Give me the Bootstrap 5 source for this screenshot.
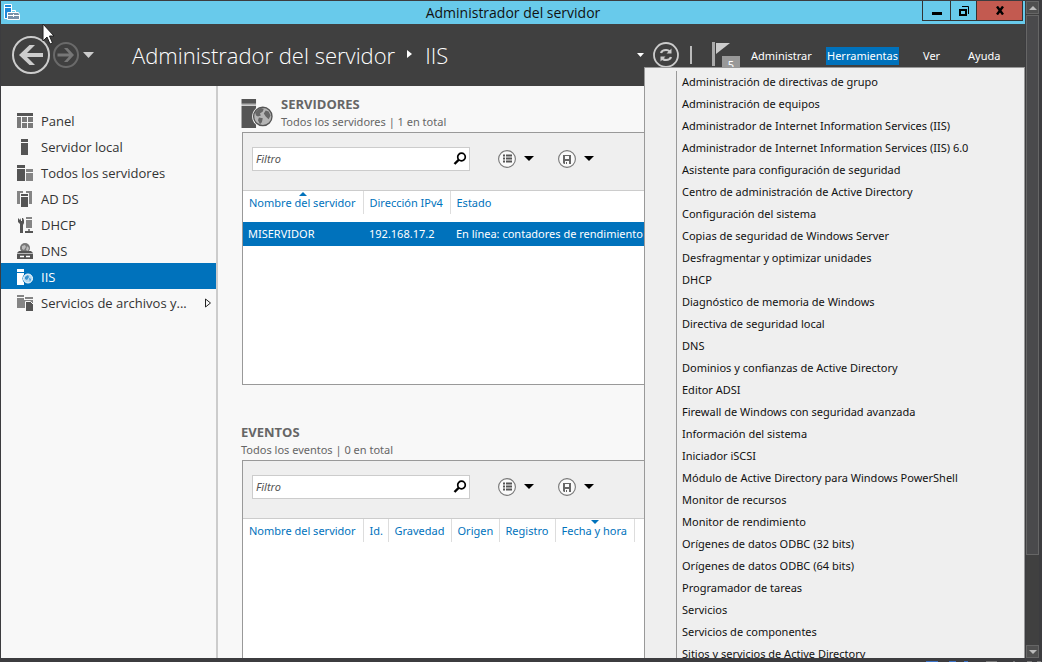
<!DOCTYPE html>
<html lang="es">
<head>
<meta charset="utf-8">
<meta name="viewport" content="width=device-width, initial-scale=1">
<title>Administrador del servidor</title>
<link href="https://cdn.jsdelivr.net/npm/bootstrap@5.3.0/dist/css/bootstrap.min.css" rel="stylesheet">
<style>
:root{--ink:#404040;--sky:#68caeb;--accent:#0072bc;--pane:#f8f8f8;--tool:#efefef;--edge:#999;--soft:#ccc}
body{font-family:"Noto Sans","Open Sans",sans-serif;font-size:11px;line-height:16px;background:#3c3c3f;color:#333}
button{font:inherit;color:inherit;border:0;background:transparent;padding:0}
svg{display:block;flex:none}
.screen{height:100vh;padding:1px 0 4px 1px;overflow:hidden}
.window-main{min-width:0}
.titlebar{background:var(--sky);height:23px;color:#111;font:14px/23px "Open Sans",sans-serif}
.app-icon{left:2px;top:2px}
.win-buttons{right:2px;top:0;height:20px;border:1px solid #333;border-top:0}
.win-buttons button{width:28px;border-right:1px solid #333;color:#000}
.win-buttons .restore{width:26px}
.win-buttons .close-win{width:45px;border:0;background:#c35a50}
.header{background:var(--ink);color:#fff;height:62px}
.nav-icons{padding-left:11px;width:131px}
.nav-icons .forward{margin-left:3px}
.crumb{font:300 22px/30px "Open Sans",sans-serif;white-space:nowrap;gap:12px}
.crumb svg{margin-top:-2px}
.status{gap:9px;padding-right:10px}
.status .divider{width:2px;height:18px;background:#bbb;margin:0 11px 0 2px}
.flag{width:28px;height:28px}
.flag .count{left:10px;top:15px;width:18px;height:16px;background:#999;line-height:17px}
.menus{display:grid;grid-template-columns:76px 96px 45px 36px;justify-items:start;margin:1px 22px 0 0}
.menus button{padding:0 1px;line-height:18px}
.menus .active{background:var(--accent)}
.side{width:217px;background:var(--pane);border-right:2px solid var(--soft);padding-top:21px}
.side a{height:26px;padding:1px 4px 0 16px;gap:8px;font:13px/20px "Open Sans",sans-serif;color:#333;text-decoration:none}
.side a.active{background:var(--accent);color:#fff}
.content{background:var(--pane);min-width:0;padding:9px 0 0 23px}
.head-gap{margin-top:38px}
.tile-title{font:700 13px/18px "Open Sans",sans-serif;color:#666;margin:0}
.tile-sub{line-height:18px;color:#666}
.tile{border:1px solid var(--edge);background:#fff;margin:1px 0 0 1px;flex:none}
.tile.servers{min-height:253px}
.tools{height:58px;background:var(--tool);border-bottom:1px solid var(--soft);padding:14px 0 0 9px}
.search{width:218px;height:24px;background:#fff;border:1px solid var(--soft);padding-right:2px}
.search input{border:0;outline:0;min-width:0;padding:0 0 0 3px;font-style:italic;background:transparent}
.search input::placeholder{color:#555;opacity:1}
.tool{height:24px;gap:7px}
.grid-data{border-collapse:collapse;table-layout:fixed;width:100%;white-space:nowrap}
.grid-data th{font-weight:400;color:var(--accent);padding:0 0 0 6px;height:23px;border-left:1px solid #ddd;position:relative}
.grid-data th:first-child{border-left:0}
.grid-data .sort{top:1px;left:50%;margin-left:-4px}
.grid-data .spacer td{background:#fff;height:8px}
.grid-data td{background:var(--accent);color:#fff;height:24px;padding:0 0 0 6px}
.grid-data td:first-child{padding-left:5px}
.w-name{width:120px}.w-ip{width:87px}.w-id{width:25px}.w-sev{width:63px}.w-src{width:48px}.w-log{width:56px}.w-date{width:79px}
.menu-pop{right:0;top:66px;bottom:0;width:381px;background:var(--tool);border:1px solid var(--edge);border-bottom:0;overflow:hidden;padding:3px 0 0 31px;z-index:5}
.menu-pop ul{border-left:1px solid var(--edge)}
.menu-pop button{display:block;width:100%;height:22px;text-align:left;padding-left:5px;color:#111;white-space:nowrap}
.vscroll{width:13px;margin:0 3px 0 1px;background:#404040}
.vscroll button{height:13px;background:#505050;border:1px solid #666}
.vscroll .thumb{flex:6 1 0;margin-top:1px;background:#4a4a4c;border:1px solid #666}
.pointer{left:42px;top:23px;z-index:9}
.taskbar-peek{right:0;bottom:0}
</style>
</head>
<body>
<svg width="0" height="0" class="position-absolute" aria-hidden="true">
<defs>
<g id="list"><circle cx="9" cy="9" r="8.4" fill="#fafafa" stroke="#777" stroke-width="1.1"/><path d="M5 5.500h2M8 5.500h6M5 8.500h2M8 8.500h6M5 11.500h2M8 11.500h6" stroke="#555" stroke-width="2"/></g>
<g id="disk"><circle cx="9" cy="9" r="8.400" fill="#fafafa" stroke="#777" stroke-width="1.100"/><path d="M5 5h8v9H6l-1-1z" fill="#666"/><path d="M7 6h4v3H7zM7 11h4v3H9v-2H8v2H7z" fill="#fafafa"/></g>
<g id="glass"><circle cx="8.500" cy="5" r="3.800" fill="none" stroke="#000" stroke-width="1.700"/><path d="M6 7.500L1.500 12" stroke="#000" stroke-width="2.400"/></g>
<path id="caret" d="M0 0h10L5 5z"/>
</defs>
</svg>
<div class="screen d-flex position-relative">
<main class="window-main d-flex flex-column flex-grow-1 position-relative">
  <div class="titlebar text-center position-relative flex-shrink-0">
    <svg class="app-icon position-absolute" width="18" height="18" viewBox="0 0 18 18"><path d="M1.500 1.500h7v14h-7z" fill="#1e88d8" stroke="#fff"/><path d="M1 4.500h8" stroke="#fff"/><path d="M4.500 9.500h11l1 2v5h-12z" fill="#7890a8" stroke="#fff"/><path d="M8.500 9V7.500h4V9M4 12.500h13M10.500 11v3" fill="none" stroke="#fff"/></svg>
    Administrador del servidor
    <div class="win-buttons position-absolute d-flex">
      <button aria-label="Minimizar" class="d-flex align-items-center justify-content-center"><svg width="10" height="10"><path d="M0 6h10v3H0z"/></svg></button>
      <button aria-label="Restaurar" class="restore d-flex align-items-center justify-content-center"><svg width="10" height="10" fill="none" stroke="#000"><path d="M1 4h6v5H1z" stroke-width="2"/><path d="M3 .5h6.500V8"/></svg></button>
      <button aria-label="Cerrar" class="close-win d-flex align-items-center justify-content-center"><svg width="10" height="9" viewBox="0 0 10 9"><path d="M2 .5L8 8.500M8 .5L2 8.500" stroke="#000" stroke-width="2.400"/></svg></button>
    </div>
  </div>
  <header class="header d-flex align-items-center flex-shrink-0">
    <div class="nav-icons d-flex align-items-center flex-shrink-0">
      <button aria-label="Atrás"><svg width="38" height="38" viewBox="0 0 38 38"><circle cx="19" cy="19" r="18" fill="none" stroke="#ccc" stroke-width="2"/><path d="M7 19L17.500 9h5.500l-8 8h16v4H15l8 8h-5.500z" fill="#ccc"/></svg></button>
      <button aria-label="Adelante" class="forward"><svg width="26" height="26" viewBox="0 0 26 26"><circle cx="13" cy="13" r="12" fill="none" stroke="#6a6a6a" stroke-width="2"/><path d="M21 13L14.500 6H11l5 5.500H4.500v3H16l-5 5.500h3.500z" fill="#777"/></svg></button>
      <button aria-label="Historial" class="ms-1"><svg width="12" height="7"><path d="M0 0h11L5.500 6z" fill="#ccc"/></svg></button>
    </div>
    <div class="crumb d-flex align-items-center"><span>Administrador del servidor</span><svg width="6" height="8"><path d="M0 0l5 4-5 4z" fill="#fff"/></svg><span>IIS</span></div>
    <div class="status d-flex align-items-center ms-auto">
      <svg width="7" height="4"><path d="M0 0h7L3.500 4z" fill="#fff"/></svg>
      <button aria-label="Actualizar"><svg width="26" height="26" viewBox="0 0 26 26" fill="none" stroke="#ccc"><circle cx="13" cy="13" r="12" stroke-width="1.800"/><path d="M8 11q1-3 5-3 3 0 4 2M18 15q-1 3-5 3-3 0-4-2" stroke-width="2.200"/><path d="M18.500 6.500v5h-5zM7.500 19.500v-5h5z" fill="#ccc" stroke="none"/></svg></button>
      <span class="divider"></span>
      <button class="flag position-relative" aria-label="Notificaciones"><svg width="20" height="26"><path d="M0 0h3v24H0z" fill="#aaa"/><path d="M4 1h14L4 12z" fill="#ccc"/></svg><span class="count position-absolute">5</span></button>
    </div>
    <nav class="menus flex-shrink-0"><button>Administrar</button><button class="active">Herramientas</button><button>Ver</button><button>Ayuda</button></nav>
  </header>
  <div class="d-flex flex-grow-1 overflow-hidden">
    <nav class="side flex-shrink-0">
      <a href="#" class="d-flex align-items-center"><svg width="16" height="16"><path d="M0 0h16v3H0z" fill="#555"/><path d="M0 4h4v11H0zM5 4h5v5H5zM11 4h5v5h-5zM5 10h5v5H5zM11 10h5v5h-5z" fill="#7a7a7a"/></svg>Panel</a>
      <a href="#" class="d-flex align-items-center"><svg width="16" height="16" fill="#555"><path d="M4 0h7v3H4zM4 4h7v12H4z"/></svg>Servidor local</a>
      <a href="#" class="d-flex align-items-center"><svg width="16" height="16"><path d="M0 0h8v3H0zM0 4h8v12H0z" fill="#555"/><path d="M9 4h7v3H9zM9 8h7v8H9z" fill="#858585"/></svg>Todos los servidores</a>
      <a href="#" class="d-flex align-items-center"><svg width="16" height="16"><path d="M0 0h6v2H3v11H0zM9 0h6v13h-3V2H9z" fill="#858585"/><path d="M3 2h9v14H3z" fill="#f8f8f8"/><path d="M4 3h7v2H4zM4 6h7v10H4z" fill="#555"/></svg>AD DS</a>
      <a href="#" class="d-flex align-items-center"><svg width="16" height="16"><path d="M1 1l2 2 1-2h2l1 2v3L6 8v8H3V7L1 5z" fill="#555"/><path d="M4 1h1v3H4z" fill="#f8f8f8"/><path d="M9 0h6v2H9zM9 3h6v8H9zM11 12h2v2h-2z" fill="#858585"/><path d="M8 14h8v2H8z" fill="#555"/></svg>DHCP</a>
      <a href="#" class="d-flex align-items-center"><svg width="16" height="16"><circle cx="8" cy="5" r="5" fill="#777"/><path d="M5 3l3-1 1 2-2 3-2-1zM10 3l2 2-1 3-2-1z" fill="#bbb"/><path d="M2 8h12l2 2v6H0v-6z" fill="#555"/><path d="M0 10.500h16" stroke="#bbb"/><path d="M3 13.500h4M9 13.500h4" stroke="#fff" stroke-width="1.500"/></svg>DNS</a>
      <a href="#" class="active d-flex align-items-center"><svg width="16" height="16"><path d="M0 0h7v3H0zM0 4h7v12H0z" fill="#fff"/><circle cx="11" cy="9.500" r="5.500" fill="#0072bc"/><circle cx="11" cy="9.500" r="4.500" fill="#b5d9f0" stroke="#fff"/><path d="M8 8l3-2 1 2-2 3-2-1zM12 9l2 1-1 3z" fill="#3a93cf"/></svg>IIS</a>
      <a href="#" class="d-flex align-items-center"><svg width="16" height="16"><path d="M0 0h7v2H0zM0 3h7v10H0zM8 2h8v2H8z" fill="#858585"/><path d="M7 5h9v8H7z" fill="#858585"/><path d="M8.500 6.500h5l3 3v7h-8z" fill="#555" stroke="#f8f8f8"/></svg>Servicios de archivos y...<svg class="ms-auto" width="8" height="10"><path d="M1.500 1l5 4-5 4z" fill="none" stroke="#222"/></svg></a>
    </nav>
    <section class="content d-flex flex-column flex-grow-1">
      <div class="d-flex flex-shrink-0 align-items-start">
        <svg class="mt-1 me-2" width="32" height="30" viewBox="0 0 32 31"><path d="M0 0h15v5H0zM0 7h15v23H0z" fill="#555"/><path d="M0 5.500h15" stroke="#999"/><circle cx="22" cy="18" r="11" fill="#f8f8f8"/><circle cx="22" cy="18" r="9.500" fill="#b5b5b5" stroke="#555" stroke-width="1.400"/><path d="M14 14l5-5 4 1-1 3-3 2 1 2-3 1-2-1zM18 19l4 1-1 4-2 2-2-4zM25 12l3 1 2 4-2 4-3-3-2-3z" fill="#666"/></svg>
        <div><h2 class="tile-title">SERVIDORES</h2><div class="tile-sub">Todos los servidores | 1 en total</div></div>
      </div>
      <div class="tile servers">
        <div class="tools d-flex">
          <div class="search d-flex align-items-center"><input class="flex-grow-1" type="text" placeholder="Filtro" aria-label="Filtro de servidores"><button aria-label="Buscar"><svg width="14" height="14"><use href="#glass"/></svg></button></div>
          <button class="tool d-flex align-items-center ms-4 ps-1" aria-label="Consultas"><svg width="19" height="18"><use href="#list"/></svg><svg width="10" height="6"><use href="#caret"/></svg></button>
          <button class="tool d-flex align-items-center ms-4" aria-label="Guardar"><svg width="19" height="18"><use href="#disk"/></svg><svg width="10" height="6"><use href="#caret"/></svg></button>
        </div>
        <table class="grid-data">
          <colgroup><col class="w-name"><col class="w-ip"><col></colgroup>
          <thead><tr><th>Nombre del servidor<svg class="sort position-absolute" width="8" height="4"><path d="M0 4L4 0l4 4z" fill="#0072bc"/></svg></th><th>Dirección IPv4</th><th>Estado</th></tr></thead>
          <tbody><tr class="spacer"><td colspan="3"></td></tr><tr><td>MISERVIDOR</td><td>192.168.17.2</td><td>En línea: contadores de rendimiento</td></tr></tbody>
        </table>
      </div>
      <div class="head-gap flex-shrink-0"><h2 class="tile-title">EVENTOS</h2><div class="tile-sub">Todos los eventos | 0 en total</div></div>
      <div class="tile flex-grow-1 border-bottom-0">
        <div class="tools d-flex">
          <div class="search d-flex align-items-center"><input class="flex-grow-1" type="text" placeholder="Filtro" aria-label="Filtro de eventos"><button aria-label="Buscar"><svg width="14" height="14"><use href="#glass"/></svg></button></div>
          <button class="tool d-flex align-items-center ms-4 ps-1" aria-label="Consultas"><svg width="19" height="18"><use href="#list"/></svg><svg width="10" height="6"><use href="#caret"/></svg></button>
          <button class="tool d-flex align-items-center ms-4" aria-label="Guardar"><svg width="19" height="18"><use href="#disk"/></svg><svg width="10" height="6"><use href="#caret"/></svg></button>
        </div>
        <table class="grid-data">
          <colgroup><col class="w-name"><col class="w-id"><col class="w-sev"><col class="w-src"><col class="w-log"><col class="w-date"><col></colgroup>
          <thead><tr><th>Nombre del servidor</th><th>Id.</th><th>Gravedad</th><th>Origen</th><th>Registro</th><th>Fecha y hora<svg class="sort position-absolute" width="8" height="4"><path d="M0 0h8L4 4z" fill="#0072bc"/></svg></th><th></th></tr></thead>
        </table>
      </div>
    </section>
  </div>
  <div class="menu-pop position-absolute">
    <ul class="list-unstyled mb-0">
      <li><button>Administración de directivas de grupo</button></li>
      <li><button>Administración de equipos</button></li>
      <li><button>Administrador de Internet Information Services (IIS)</button></li>
      <li><button>Administrador de Internet Information Services (IIS) 6.0</button></li>
      <li><button>Asistente para configuración de seguridad</button></li>
      <li><button>Centro de administración de Active Directory</button></li>
      <li><button>Configuración del sistema</button></li>
      <li><button>Copias de seguridad de Windows Server</button></li>
      <li><button>Desfragmentar y optimizar unidades</button></li>
      <li><button>DHCP</button></li>
      <li><button>Diagnóstico de memoria de Windows</button></li>
      <li><button>Directiva de seguridad local</button></li>
      <li><button>DNS</button></li>
      <li><button>Dominios y confianzas de Active Directory</button></li>
      <li><button>Editor ADSI</button></li>
      <li><button>Firewall de Windows con seguridad avanzada</button></li>
      <li><button>Información del sistema</button></li>
      <li><button>Iniciador iSCSI</button></li>
      <li><button>Módulo de Active Directory para Windows PowerShell</button></li>
      <li><button>Monitor de recursos</button></li>
      <li><button>Monitor de rendimiento</button></li>
      <li><button>Orígenes de datos ODBC (32 bits)</button></li>
      <li><button>Orígenes de datos ODBC (64 bits)</button></li>
      <li><button>Programador de tareas</button></li>
      <li><button>Servicios</button></li>
      <li><button>Servicios de componentes</button></li>
      <li><button>Sitios y servicios de Active Directory</button></li>
    </ul>
  </div>
</main>
<div class="vscroll d-flex flex-column flex-shrink-0">
  <button class="d-flex align-items-center justify-content-center" aria-label="Subir"><svg width="8" height="4"><path d="M0 4L4 0l4 4z" fill="#bbb"/></svg></button>
  <div class="thumb"></div><div class="flex-grow-1"></div>
  <button class="d-flex align-items-center justify-content-center" aria-label="Bajar"><svg width="8" height="4"><path d="M0 0h8L4 4z" fill="#bbb"/></svg></button>
</div>
<svg class="pointer position-absolute" width="13" height="22"><path d="M1 1v17l4-4 3 7 2.500-1L7.500 13H12z" fill="#fff" stroke="#222"/></svg>
<svg class="taskbar-peek position-absolute" width="120" height="1"><path d="M4 0h12v1H4zM27 0h7v1h-7zM42 0h4v1h-4z" fill="#3b73c8"/><path d="M64 0h11v1H64zM91 0h2v1h-2zM105 0h5v1h-5zM115 0h4v1h-4z" fill="#777"/></svg>
</div>
<script src="https://cdn.jsdelivr.net/npm/bootstrap@5.3.0/dist/js/bootstrap.bundle.min.js"></script>
</body>
</html>
